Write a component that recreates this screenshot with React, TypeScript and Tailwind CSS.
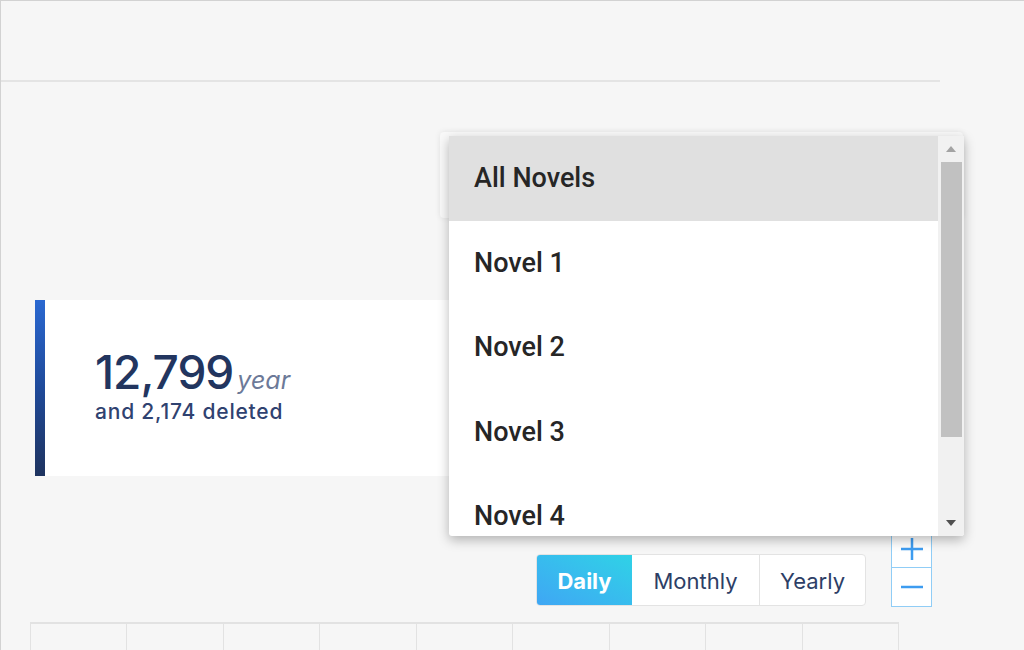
import React from "react";

const novels = ["All Novels", "Novel 1", "Novel 2", "Novel 3", "Novel 4"];
const tableCols = [96, 97, 96, 97, 96, 97, 96, 97, 96];

const App = () => {
  return (
    <div className="relative w-[1024px] h-[650px] overflow-hidden bg-[#f6f6f6] border-t border-l border-[#d2d2d2] font-['Inter',sans-serif]">
      {/* header strip */}
      <div className="w-[939px] h-[81px] border-b-2 border-[#e4e4e4]" />

      {/* select trigger (covered by open menu) */}
      <div className="ml-[439px] mt-[50px] w-[523px] h-[86px] bg-[#f9f9f9] rounded-sm shadow-[0_0_6px_rgba(0,0,0,0.08)]" />

      {/* stat card */}
      <div className="ml-[34px] mt-[82px] w-[600px] h-[176px] bg-white flex">
        <div className="w-[10px] bg-gradient-to-b from-[#2a68d1] via-[#1f4a9a] to-[#1e335f]" />
        <div className="pl-[50px] pb-[2px] flex flex-col justify-center">
          <div className="flex items-baseline gap-[4px]">
            <span className="text-[46px] leading-[44px] font-medium tracking-[-1px] text-[#22355f]">12,799</span>
            <span className="text-[25px] italic text-[#6c7998]">year</span>
          </div>
          <div className="text-[21px] leading-[24px] font-medium tracking-[0.8px] text-[#2f4270]">and 2,174 deleted</div>
        </div>
      </div>

      {/* period switch + zoom */}
      <div className="flex items-end mt-[55px] h-[76px]">
        <div className="ml-[535px] mb-[1px] flex h-[52px] bg-white border border-[#e3e3e3] rounded-[4px] overflow-hidden">
          <button className="w-[95px] pt-[3px] bg-gradient-to-tr from-[#3fa6f4] to-[#2fd2e6] text-white font-bold text-[22px]">
            Daily
          </button>
          <button className="w-[128px] pt-[3px] border-r border-[#e3e3e3] text-[#2d3e66] text-[22px]">
            Monthly
          </button>
          <button className="w-[105px] pt-[3px] text-[#2d3e66] text-[22px]">Yearly</button>
        </div>
        <div className="ml-[25px] w-[41px] flex flex-col border border-[#90cdf6] bg-white">
          <button className="h-[38px] flex items-center justify-center border-b border-[#90cdf6]">
            <svg width="24" height="24" viewBox="0 0 24 24">
              <path d="M12 1v22M1 12h22" stroke="#3d9cf0" strokeWidth="2.5" />
            </svg>
          </button>
          <button className="h-[38px] flex items-center justify-center">
            <svg width="24" height="24" viewBox="0 0 24 24">
              <path d="M1 12h22" stroke="#3d9cf0" strokeWidth="2.5" />
            </svg>
          </button>
        </div>
      </div>

      {/* chart grid */}
      <div className="mt-[15px] ml-[29px] flex border-t-2 border-l border-[#e2e2e2] h-[40px] w-fit">
        {tableCols.map((w, i) => (
          <div key={i} style={{ width: w }} className="border-r border-[#e2e2e2]" />
        ))}
      </div>

      {/* open dropdown menu */}
      <div className="absolute left-[448px] top-[135px] w-[515px] h-[400px] bg-white flex overflow-hidden shadow-[0_4px_12px_rgba(0,0,0,0.28)] rounded-b-[3px] font-['Roboto',sans-serif]">
        <div className="flex-1">
          {novels.map((n, i) => (
            <div
              key={n}
              className={`h-[84.5px] flex items-center pl-[25px] text-[27px] font-medium text-[#262626] ${
                i === 0 ? "bg-[#e0e0e0]" : ""
              }`}
            >
              {n}
            </div>
          ))}
        </div>
        <div className="w-[26px] bg-[#f1f1f1] flex flex-col items-center">
          <div className="h-[26px] flex items-center justify-center">
            <svg width="10" height="6" viewBox="0 0 10 6">
              <path d="M5 0L10 6H0z" fill="#a3a3a3" />
            </svg>
          </div>
          <div className="w-[21px] h-[275px] bg-[#c1c1c1]" />
          <div className="flex-1" />
          <div className="h-[26px] flex items-center justify-center">
            <svg width="10" height="6" viewBox="0 0 10 6">
              <path d="M0 0h10L5 6z" fill="#505050" />
            </svg>
          </div>
        </div>
      </div>
    </div>
  );
};

export default App;
